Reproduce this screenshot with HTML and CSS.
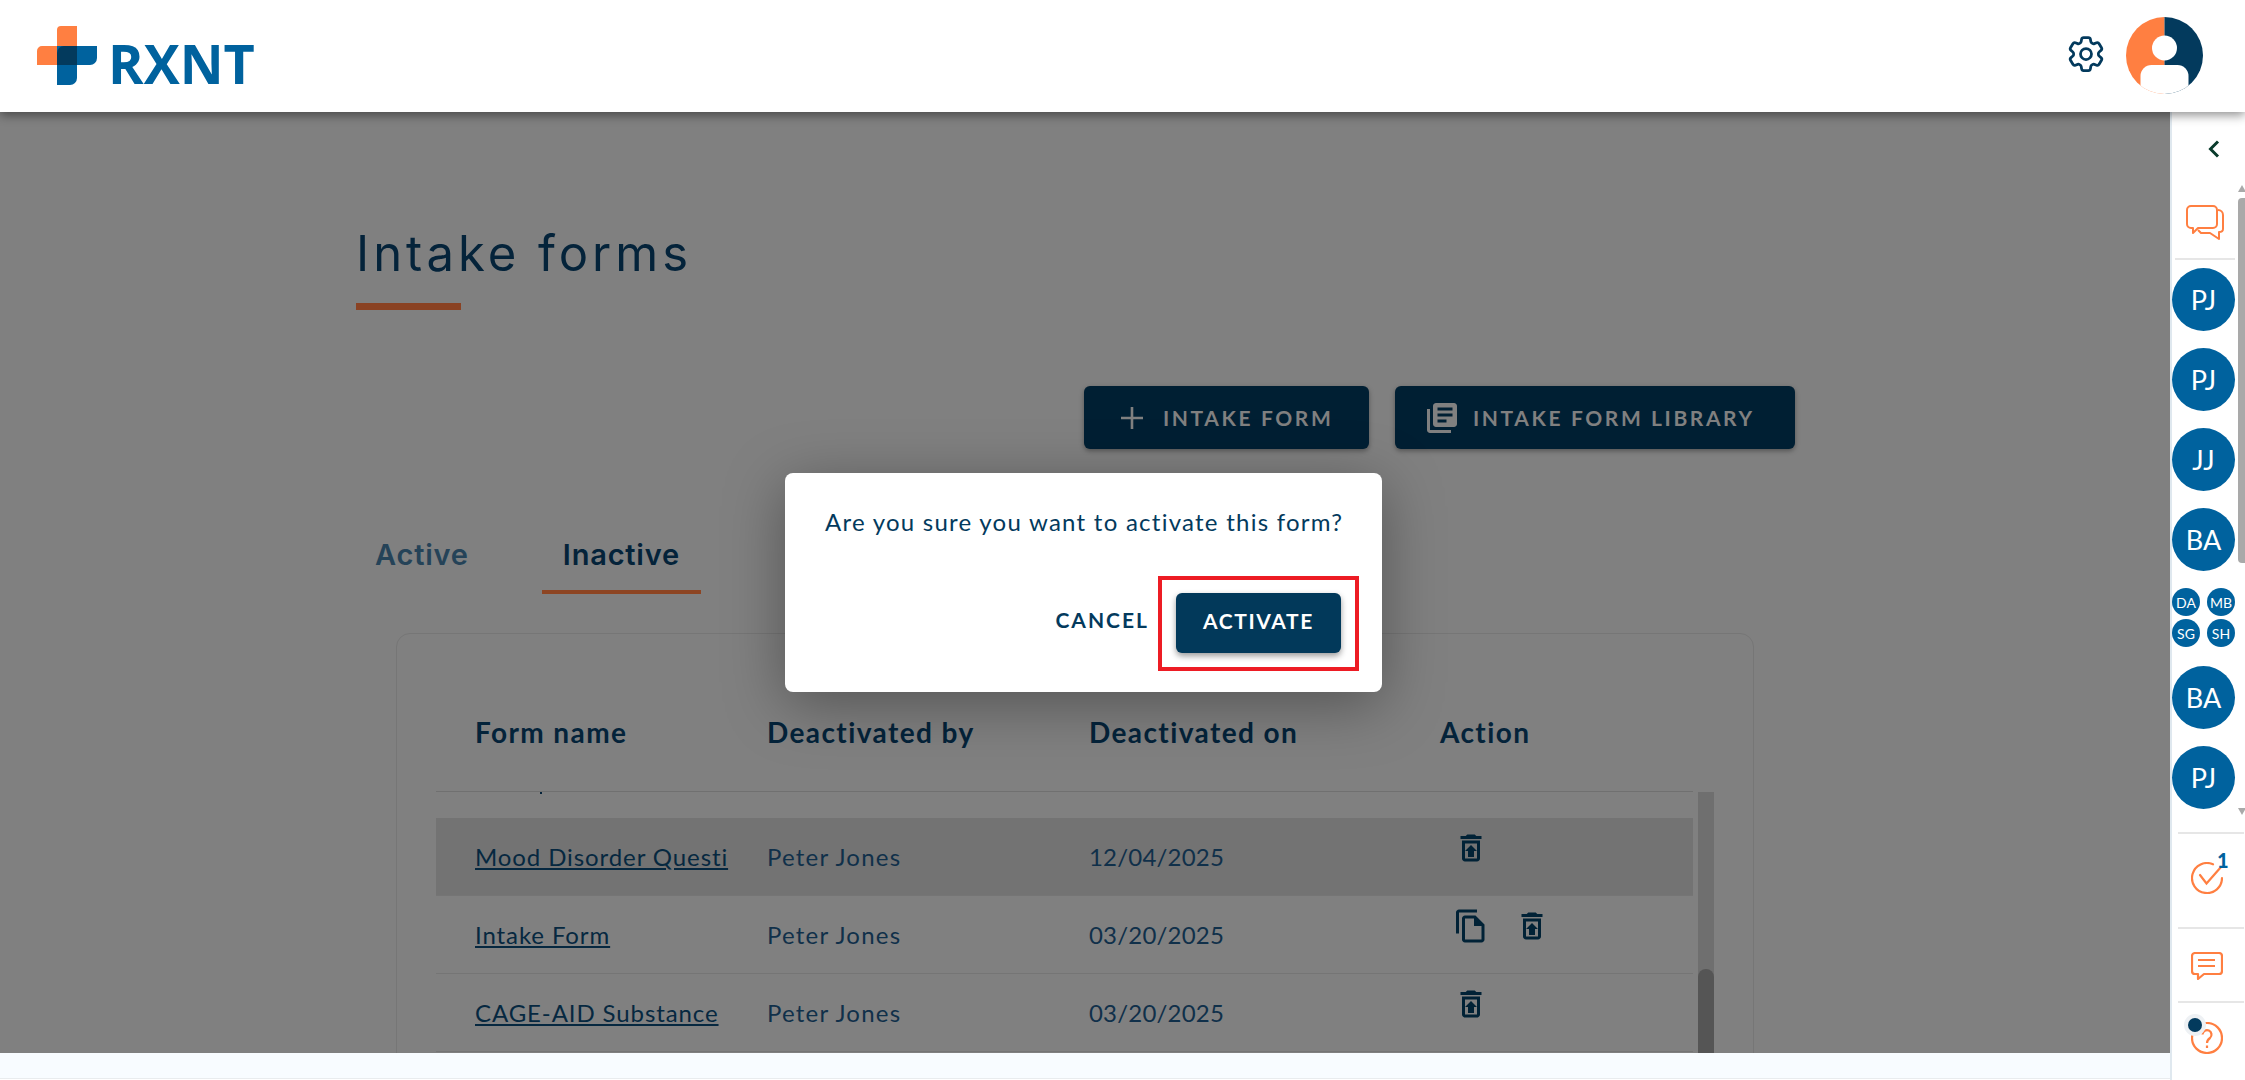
FILE: index.html
```html
<!DOCTYPE html>
<html lang="en">
<head>
<meta charset="utf-8">
<title>Intake forms</title>
<link rel="stylesheet" href="styles.css">
</head>
<body>
<header class="topbar">
  <div class="brand">
    <svg class="brand-mark" viewBox="0 0 60 59" width="60" height="59" aria-hidden="true">
      <path d="M20 20V4a4 4 0 0 1 4-4h16v39H0V25a5 5 0 0 1 5-5z" fill="#ff7f41"/>
      <path d="M20 20h40v12a7 7 0 0 1-7 7H40v13a7 7 0 0 1-7 7H20z" fill="#00629e"/>
      <path d="M27 20h13v19H20V27a7 7 0 0 1 7-7z" fill="#033a5d"/>
    </svg>
    <span class="brand-name">RXNT</span>
  </div>
  <div class="topbar-right">
    <svg class="gear" viewBox="0 0 24 24" width="44" height="44" aria-hidden="true">
      <path d="M9.594 3.94c.09-.542.56-.94 1.11-.94h2.593c.55 0 1.02.398 1.11.94l.213 1.281c.063.374.313.686.645.87.074.04.147.083.22.127.325.196.72.257 1.075.124l1.217-.456a1.125 1.125 0 0 1 1.37.49l1.296 2.247a1.125 1.125 0 0 1-.26 1.431l-1.003.827c-.293.241-.438.613-.43.992a7.723 7.723 0 0 1 0 .255c-.008.378.137.75.43.991l1.004.827c.424.35.534.955.26 1.43l-1.298 2.247a1.125 1.125 0 0 1-1.369.491l-1.217-.456c-.355-.133-.75-.072-1.076.124a6.47 6.47 0 0 1-.22.128c-.331.183-.581.495-.644.869l-.213 1.281c-.09.543-.56.94-1.11.94h-2.594c-.55 0-1.019-.398-1.11-.94l-.213-1.281c-.062-.374-.312-.686-.644-.87a6.52 6.52 0 0 1-.22-.127c-.325-.196-.72-.257-1.076-.124l-1.217.456a1.125 1.125 0 0 1-1.369-.49l-1.297-2.247a1.125 1.125 0 0 1 .26-1.431l1.004-.827c.292-.24.437-.613.43-.991a6.932 6.932 0 0 1 0-.255c.007-.38-.138-.751-.43-.992l-1.004-.827a1.125 1.125 0 0 1-.26-1.43l1.297-2.247a1.125 1.125 0 0 1 1.37-.491l1.216.456c.356.133.751.072 1.076-.124.072-.044.146-.086.22-.128.332-.183.582-.495.644-.869l.214-1.28Z" fill="none" stroke="#033a5d" stroke-width="1.5"/>
      <circle cx="12" cy="12" r="3" fill="none" stroke="#033a5d" stroke-width="1.5"/>
    </svg>
    <svg class="avatar" viewBox="0 0 77 77" width="77" height="77" aria-hidden="true">
      <defs><clipPath id="avatarClip"><circle cx="38.5" cy="38.5" r="38.5"/></clipPath></defs>
      <g clip-path="url(#avatarClip)">
        <rect width="38.5" height="77" fill="#ff7f41"/>
        <rect x="38.5" width="38.5" height="77" fill="#033a5d"/>
        <circle cx="38.5" cy="31" r="12.5" fill="#fff"/>
        <rect x="14.500" y="48" width="48" height="40" rx="11" fill="#fff"/>
      </g>
    </svg>
  </div>
</header>

<div class="shell">
  <main class="main">
    <div class="content">
      <section class="page">
        <h1 class="title">Intake forms</h1>
        <div class="title-rule"></div>
        <div class="actions">
          <button class="btn btn-form">
            <svg viewBox="0 0 22 22" width="22" height="22" aria-hidden="true"><path d="M11 0v22M0 11h22" stroke="#808080" stroke-width="2.600" fill="none"/></svg>
            <span>INTAKE FORM</span>
          </button>
          <button class="btn btn-library">
            <svg viewBox="0 0 24 24" width="36" height="36" aria-hidden="true"><path fill="#808080" d="M4 6H2v14c0 1.1.9 2 2 2h14v-2H4V6zm16-4H8c-1.1 0-2 .9-2 2v12c0 1.1.9 2 2 2h12c1.100 0 2-.9 2-2V4c0-1.100-.9-2-2-2zm-1 9H9V9h10v2zm-4 4H9v-2h6v2zm4-8H9V5h10v2z"/></svg>
            <span>INTAKE FORM LIBRARY</span>
          </button>
        </div>
        <nav class="tabs">
          <span class="tab">Active</span>
          <span class="tab tab-on">Inactive</span>
        </nav>
        <div class="card">
          <div class="grid-row head">
            <span>Form name</span>
            <span>Deactivated by</span>
            <span>Deactivated on</span>
            <span>Action</span>
          </div>
          <div class="table-wrap">
            <div class="rows">
              <i class="clipped-mark"></i>
              <div class="grid-row row hovered">
                <div class="name-cell"><a class="name">Mood Disorder Questi</a></div>
                <span>Peter Jones</span>
                <span class="date">12/04/2025</span>
                <div class="icons">
                  <svg viewBox="0 0 24 24" width="36" height="36" aria-hidden="true"><use href="#restore"/></svg>
                </div>
              </div>
              <div class="grid-row row">
                <div class="name-cell"><a class="name">Intake Form</a></div>
                <span>Peter Jones</span>
                <span class="date">03/20/2025</span>
                <div class="icons">
                  <svg viewBox="0 0 24 24" width="36" height="36" aria-hidden="true"><path fill="#012236" fill-rule="evenodd" d="M16 1H4c-1.100 0-2 .9-2 2v14h2V3h12zM15 5H8c-1.100 0-1.990.9-1.990 2L6 21c0 1.100.89 2 1.990 2H19c1.100 0 2-.9 2-2V11zM8 7h6v5h5v9H8z"/></svg>
                  <svg viewBox="0 0 24 24" width="36" height="36" aria-hidden="true"><use href="#restore"/></svg>
                </div>
              </div>
              <div class="grid-row row">
                <div class="name-cell"><a class="name">CAGE-AID Substance</a></div>
                <span>Peter Jones</span>
                <span class="date">03/20/2025</span>
                <div class="icons">
                  <svg viewBox="0 0 24 24" width="36" height="36" aria-hidden="true"><use href="#restore"/></svg>
                </div>
              </div>
            </div>
            <div class="vscroll"><div class="vthumb"></div></div>
          </div>
        </div>
      </section>

      <div class="dialog" role="dialog">
        <p class="dialog-text">Are you sure you want to activate this form?</p>
        <div class="dialog-actions">
          <button class="link-btn">CANCEL</button>
          <button class="primary-btn">ACTIVATE</button>
        </div>
      </div>
      <div class="callout"></div>
    </div>
    <div class="strip"></div>
  </main>

  <aside class="rail">
    <div class="rail-chevron">
      <svg viewBox="0 0 12 18" width="12" height="18" aria-hidden="true"><path d="M10 1.500 2.500 9l7.500 7.500" fill="none" stroke="#0a3b2c" stroke-width="3"/></svg>
    </div>
    <div class="rail-scroll">
      <div class="rail-list">
        <div class="rail-icon chat">
          <svg viewBox="0 0 38 35" width="38" height="35" aria-hidden="true" fill="none" stroke="#ff7f41" stroke-width="2" stroke-linejoin="round">
            <path d="M5 1h22a4 4 0 0 1 4 4v14a4 4 0 0 1-4 4H12l-5 5v-5H5a4 4 0 0 1-4-4V5a4 4 0 0 1 4-4z"/>
            <path d="M32 5a5 5 0 0 1 5 5v14c0 2-1 3-4 3v7l-9-6h-9l-3-3"/>
          </svg>
        </div>
        <hr class="rail-sep first">
        <div class="bubble">PJ</div>
        <div class="bubble">PJ</div>
        <div class="bubble">JJ</div>
        <div class="bubble">BA</div>
        <div class="bubble-group">
          <div class="mini">DA</div><div class="mini">MB</div>
          <div class="mini">SG</div><div class="mini">SH</div>
        </div>
        <div class="bubble">BA</div>
        <div class="bubble">PJ</div>
      </div>
      <div class="rail-bar">
        <i class="arrow up"></i>
        <i class="rail-thumb"></i>
        <i class="arrow down"></i>
      </div>
    </div>
    <hr class="rail-sep">
    <div class="rail-tool tasks">
      <svg viewBox="0 0 32 32" width="32" height="32" aria-hidden="true" fill="none" stroke="#ff7f41" stroke-width="2.200" stroke-linecap="round">
        <path d="M22 2.300A15 15 0 1 0 31 16"/>
        <path d="M9 13l6.500 8.500L30 5"/>
      </svg>
      <span class="count">1</span>
    </div>
    <hr class="rail-sep">
    <div class="rail-tool msg">
      <svg viewBox="0 0 32 28" width="32" height="28" aria-hidden="true" fill="none" stroke="#ff7f41" stroke-width="2.200" stroke-linejoin="round">
        <path d="M4 1h24a3 3 0 0 1 3 3v15a3 3 0 0 1-3 3H13l-6 5v-5H4a3 3 0 0 1-3-3V4a3 3 0 0 1 3-3z"/>
        <path d="M7 8h17M7 14h17"/>
      </svg>
    </div>
    <hr class="rail-sep">
    <div class="rail-tool help">
      <svg viewBox="0 0 32 32" width="32" height="32" aria-hidden="true" fill="none" stroke="#ff7f41" stroke-width="2.200">
        <circle cx="16" cy="16" r="15"/>
        <path d="M11.500 12.500a4.500 4.500 0 1 1 7.500 3.500c-2 1.500-3 2.500-3 5"/>
        <path d="M16 23.500v2.500"/>
      </svg>
      <i class="pulse"></i>
    </div>
  </aside>
</div>

<svg class="sprite" width="0" height="0" aria-hidden="true">
  <symbol id="restore" viewBox="0 0 24 24">
    <path fill="#012236" fill-rule="evenodd" d="M15.500 4l-1-1h-5l-1 1H5v2h14V4zM6 19c0 1.100.9 2 2 2h8c1.100 0 2-.9 2-2V7H6zM8 9h8v10H8z"/>
    <path fill="#012236" d="M10 18h4v-4h2l-4-4-4 4h2z"/>
  </symbol>
</svg>
</body>
</html>
```
FILE: styles.css
```css
* { box-sizing: border-box; }
html, body { margin: 0; height: 100%; }
body {
  width: 2245px;
  height: 1080px;
  overflow: hidden;
  background: #fff;
  font-family: "Lato", "Open Sans", sans-serif;
  display: flex;
  flex-direction: column;
}
button { font-family: inherit; border: 0; cursor: pointer; }
.sprite { position: absolute; }

/* top bar */
.topbar {
  height: 112px;
  flex: none;
  background: #fff;
  display: flex;
  justify-content: space-between;
  align-items: flex-start;
  position: relative;
  z-index: 3;
  box-shadow: 0 3px 10px rgba(0, 0, 0, .45);
}
.brand { display: flex; align-items: flex-end; padding: 26px 0 0 37px; gap: 11px; }
.brand-mark { display: block; }
.brand-name {
  font-family: "Open Sans", sans-serif;
  font-weight: 700;
  font-size: 54px;
  line-height: 39px;
  height: 39px;
  margin-bottom: 2px;
  color: #00629e;
}
.topbar-right { display: flex; align-items: center; gap: 18px; padding: 17px 42px 0 0; }
.gear { display: block; margin-top: -4px; }
.avatar { display: block; }

/* shell */
.shell { flex: 1; display: flex; min-height: 0; }
.main { flex: 1; display: flex; flex-direction: column; min-width: 0; }
.content {
  flex: none;
  height: 941px;
  background: #808080;
  position: relative;
  overflow: hidden;
}
.strip { height: 26px; flex: none; background: #f8fcff; border-bottom: 1px solid #e9ecee; }

.page { width: 1795px; padding-left: 356px; }
.title {
  margin: 0;
  padding-top: 112px;
  font-family: "Inter", sans-serif;
  font-weight: 400;
  font-size: 49px;
  line-height: 60px;
  letter-spacing: 4px;
  color: #04233a;
}
.title-rule { width: 105px; height: 7px; margin-top: 19px; background: #8a4223; }
.actions { display: flex; justify-content: flex-end; gap: 26px; margin-top: 76px; }
.btn {
  height: 63px;
  display: flex;
  align-items: center;
  background: #001f33;
  border-radius: 6px;
  color: #808080;
  font-size: 21px;
  font-weight: 700;
  letter-spacing: 2.6px;
  box-shadow: 0 2px 5px rgba(0, 0, 0, .35);
}
.btn-form { width: 285px; padding: 0 0 0 37px; gap: 20px; }
.btn-library { width: 400px; padding: 0 0 0 29px; gap: 13px; }
.btn svg { display: block; flex: none; }

.tabs { display: flex; gap: 52px; margin-top: 69px; height: 76px; margin-left: -2px; }
.tab {
  padding: 19px 21px 0;
  font-family: "Inter", sans-serif;
  font-size: 29px;
  line-height: 36px;
  font-weight: 600;
  letter-spacing: .8px;
  color: #254358;
  height: 76px;
}
.tab-on { color: #04233a; border-bottom: 4px solid #8d4523; }

.card {
  margin: 39px 0 0 40px;
  width: 1358px;
  height: 560px;
  border: 1px solid #767676;
  border-radius: 14px;
  padding-left: 39px;
}
.grid-row {
  display: grid;
  grid-template-columns: 292px 322px 351px 1fr;
  align-items: center;
  padding-left: 39px;
}
.head {
  height: 158px;
  padding-top: 38px;
  width: 1257px;
  font-size: 28px;
  font-weight: 700;
  letter-spacing: 1.4px;
  color: #04233a;
  border-bottom: 1px solid #707070;
}
.table-wrap { display: flex; gap: 5px; }
.rows { width: 1257px; padding-top: 26px; position: relative; }
.clipped-mark { position: absolute; left: 104px; top: 0; width: 2px; height: 2px; background: #04233a; }
.row {
  height: 78px;
  font-size: 24px;
  letter-spacing: 1.2px;
  color: #10304a;
  border-bottom: 1px solid #757575;
}
.hovered { background: #737373; }
.name {
  white-space: nowrap;
  text-decoration: underline;
  letter-spacing: .9px;
  color: #062840;
}
.date { letter-spacing: .2px; }
.icons { display: flex; gap: 25px; padding: 0 0 18px 13px; }
.icons svg { display: block; }
.vscroll { width: 16px; height: 262px; background: #6f6f6f; position: relative; }
.vthumb {
  position: absolute;
  left: 0;
  right: 0;
  top: 177px;
  bottom: 0;
  background: #555;
  border-radius: 8px 8px 0 0;
}

/* dialog */
.dialog {
  position: absolute;
  left: 785px;
  top: 361px;
  width: 597px;
  height: 219px;
  background: #fff;
  border-radius: 8px;
  box-shadow: 0 12px 60px rgba(0, 0, 0, .35);
  padding: 29px 41px 0 40px;
}
.dialog-text {
  margin: 0;
  font-size: 24px;
  line-height: 40px;
  letter-spacing: 1.25px;
  color: #033a5d;
  white-space: nowrap;
}
.dialog-actions { display: flex; justify-content: flex-end; align-items: center; gap: 27px; margin-top: 51px; }
.link-btn {
  background: none;
  padding: 0 0 8px;
  font-size: 21px;
  font-weight: 700;
  letter-spacing: 2px;
  color: #033a5d;
}
.primary-btn {
  width: 165px;
  height: 60px;
  padding: 0 0 6px;
  background: #02395a;
  color: #fff;
  border-radius: 6px;
  font-size: 21px;
  font-weight: 700;
  letter-spacing: 1.6px;
  box-shadow: 0 3px 6px rgba(0, 0, 0, .4);
}
.callout {
  position: absolute;
  left: 1158px;
  top: 464px;
  width: 201px;
  height: 95px;
  border: 4px solid #ed1c24;
  pointer-events: none;
}

/* right rail */
.rail {
  width: 75px;
  flex: none;
  background: #fff;
  border-left: 2px solid #dfe8ef;
  padding-top: 28px;
  position: relative;
}
.rail-chevron { height: 18px; padding-left: 36px; }
.rail-chevron svg { display: block; }
.rail-scroll { display: flex; height: 647px; margin-top: 27px; }
.rail-list { width: 66px; flex: none; }
.rail-icon.chat { padding: 20px 0 0 14px; height: 73px; }
.rail-icon.chat svg { display: block; }
.rail-sep { border: 0; height: 2px; background: #e6e6e6; margin: 0 0 0 6px; width: 66px; }
.rail-sep.first { margin: 0 0 0 3px; width: 60px; }
.bubble {
  width: 63px;
  height: 63px;
  border-radius: 50%;
  background: #00629e;
  color: #fff;
  display: flex;
  align-items: center;
  justify-content: center;
  font-size: 27px;
  margin: 0 0 17px 0;
}
.rail-sep.first + .bubble { margin-top: 8px; }
.bubble-group {
  display: grid;
  grid-template-columns: 28px 28px;
  column-gap: 7px;
  row-gap: 3px;
  margin-bottom: 19px;
  margin-top: 3px;
}
.mini {
  width: 28px;
  height: 28px;
  border-radius: 50%;
  background: #00629e;
  color: #fff;
  display: flex;
  align-items: center;
  justify-content: center;
  font-size: 14px;
}
.rail-bar { width: 7px; margin-left: 0; position: relative; flex: none; }
.arrow { position: absolute; left: 0; width: 0; height: 0; border-left: 4px solid transparent; border-right: 4px solid transparent; }
.arrow.up { top: 0; border-bottom: 7px solid #a9a9a9; }
.arrow.down { bottom: 17px; border-top: 7px solid #a9a9a9; }
.rail-thumb { position: absolute; left: 0; top: 13px; width: 8px; height: 365px; background: #a9a9a9; border-radius: 4px 0 0 4px; }

.rail-tool { position: relative; padding-left: 19px; }
.rail-tool svg { display: block; }
.tasks { height: 93px; padding-top: 28px; }
.msg { height: 72px; padding-top: 23px; }
.help { height: 60px; padding-top: 19px; }
.count {
  position: absolute;
  left: 45px;
  top: 14px;
  font-size: 20px;
  font-weight: 900;
  color: #00629e;
  line-height: 24px;
}
.pulse {
  position: absolute;
  left: 16px;
  top: 15px;
  width: 14px;
  height: 14px;
  border-radius: 50%;
  background: #033a5d;
  box-shadow: 0 0 0 4px #eef1f4;
}
```
